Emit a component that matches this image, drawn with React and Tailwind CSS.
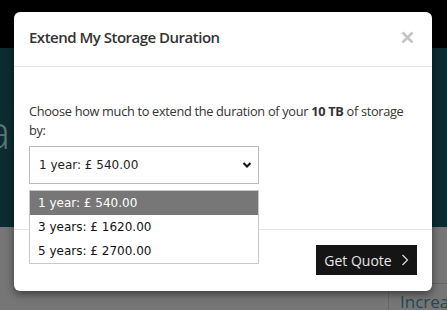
import React from "react";

const options = [
  { label: "1 year: £ 540.00", active: true },
  { label: "3 years: £ 1620.00" },
  { label: "5 years: £ 2700.00" },
];

export default function App() {
  return (
    <div className="relative w-[447px] h-[310px] overflow-hidden bg-[#767676] font-['Open_Sans',sans-serif]">
      {/* page behind the backdrop */}
      <div className="flex flex-col">
        <div className="h-[48px] bg-black" />
        <div className="h-[179px] bg-[#0b2d31] overflow-hidden">
          <div className="ml-[-14px] mt-[60px] text-[46px] leading-none font-light text-[#5f7477]">
            a
          </div>
        </div>
        <div className="flex justify-end pt-[56px]">
          <div className="w-[59px] h-[40px] border-l border-t border-[#666] pl-[11px] pt-[5px] text-[17px] text-[#1c4a52]">
            Increas
          </div>
        </div>
      </div>

      {/* modal */}
      <div className="absolute left-[14px] top-[12px] w-[418px] h-[279px] bg-white rounded-[6px] shadow-[0_3px_9px_rgba(0,0,0,0.5)] flex flex-col">
        <div className="h-[55px] flex items-center justify-between px-[15px] pb-[4px] border-b border-[#e5e5e5]">
          <h4 className="text-[15px] font-semibold tracking-[-0.5px] text-[#333]">
            Extend My Storage Duration
          </h4>
          <svg width="13" height="13" viewBox="0 0 13 13" className="mr-[3px]">
            <path
              d="M1.5 1.5L11.5 11.5M11.5 1.5L1.5 11.5"
              stroke="#c4c4c4"
              strokeWidth="2.6"
            />
          </svg>
        </div>

        <div className="relative h-[163px] px-[15px] pt-[35px] border-b border-[#e5e5e5]">
          <p className="w-[380px] text-[12.75px] leading-[19px] tracking-[-0.3px] text-[#333]">
            Choose how much to extend the duration of your <b>10 TB</b> of storage by:
          </p>
          <div className="mt-[6px] w-[230px] h-[38px] border border-[#bbb] flex items-center justify-between pl-[9px] pr-[6px] font-['DejaVu_Sans',sans-serif] text-[12px] text-[#222]">
            <span>1 year: £ 540.00</span>
            <svg width="10" height="8" viewBox="0 0 10 8">
              <path d="M1.5 2L5 5.5L8.5 2" fill="none" stroke="#111" strokeWidth="2" />
            </svg>
          </div>

          {/* open dropdown list */}
          <div className="absolute left-[15px] top-[123px] w-[230px] border border-[#c8c8c8] bg-white font-['DejaVu_Sans',sans-serif] text-[12px] z-10">
            {options.map((o) => (
              <div
                key={o.label}
                className={
                  o.active
                    ? "h-[24px] flex items-center pl-[8px] bg-[#777] text-white"
                    : "h-[24px] flex items-center pl-[8px] text-[#111]"
                }
              >
                {o.label}
              </div>
            ))}
          </div>
        </div>

        <div className="flex-1 flex items-start justify-end px-[15px] pt-[15px]">
          <button className="w-[101px] h-[30px] bg-[#151515] text-[#e6e6e6] text-[14px] flex items-center justify-center gap-[9px]">
            <span>Get Quote</span>
            <svg width="8" height="12" viewBox="0 0 8 12">
              <path d="M1.5 1L6.5 6L1.5 11" fill="none" stroke="#e6e6e6" strokeWidth="1.1" />
            </svg>
          </button>
        </div>
      </div>
    </div>
  );
}
